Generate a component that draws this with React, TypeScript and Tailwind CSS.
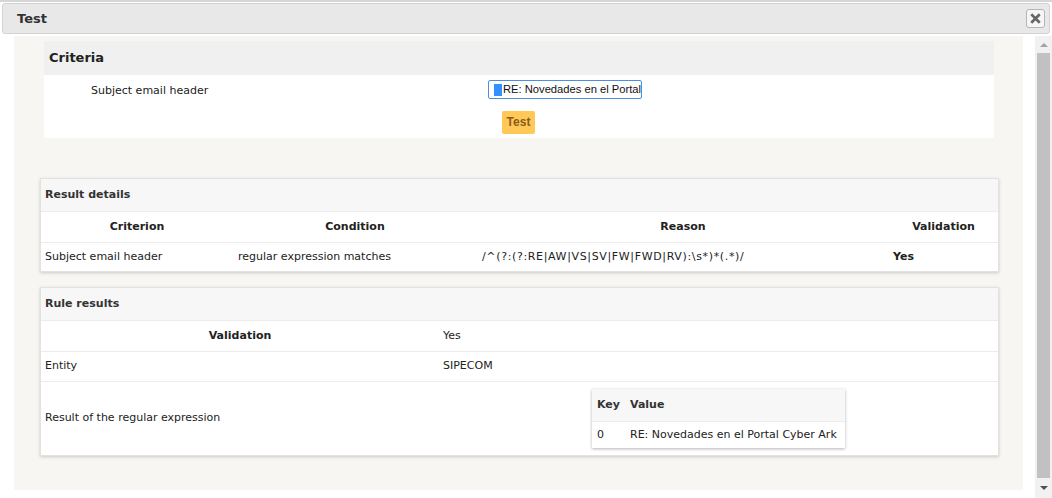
import React from "react";

const font = "font-['DejaVu_Sans',Verdana,sans-serif]";

function Panel({ title, children }: { title: string; children: React.ReactNode }) {
  return (
    <div className="ml-[26px] w-[959px] border border-[#e2e2e2] bg-white shadow-[0_1px_3px_rgba(0,0,0,0.18)]">
      <div className="flex h-[33px] items-center border-b border-[#ececec] bg-[#f7f7f7] px-[4px] text-[11px] font-bold text-[#333]">
        {title}
      </div>
      {children}
    </div>
  );
}

function Scrollbar() {
  return (
    <div className="flex w-[17px] flex-col items-center bg-[#f1f1f1]">
      <div className="flex h-[16px] items-center justify-center pt-[2px]">
        <div className="h-0 w-0 border-x-[4px] border-b-[4px] border-x-transparent border-b-[#a3a3a3]" />
      </div>
      <div className="mt-[1px] h-[425px] w-[13px] bg-[#c1c1c1]" />
      <div className="flex h-[16px] items-center justify-center pt-[4px]">
        <div className="h-0 w-0 border-x-[4px] border-t-[4px] border-x-transparent border-t-[#505050]" />
      </div>
    </div>
  );
}

export default function App() {
  return (
    <div className={`relative h-[498px] w-[1052px] overflow-hidden bg-white text-[#222] ${font}`}>
      <div className="border-t-2 border-[#d6d6d6]" />
      {/* title bar */}
      <div className="mx-[2px] mt-[1px] flex h-[31px] items-center justify-between rounded-[3px] border border-[#d3d3d3] bg-[#e8e8e8] pl-[14px] pr-[4px]">
        <span className="text-[13px] font-bold text-[#333]">Test</span>
        <button className="flex h-[19px] w-[19px] items-center justify-center rounded-[3px] border border-[#b5b5b5] bg-[#f6f6f6]">
          <svg width="11" height="11" viewBox="0 0 10 10">
            <path d="M2 2 L8 8 M8 2 L2 8" stroke="#666" strokeWidth="2.4" strokeLinecap="square" />
          </svg>
        </button>
      </div>

      <div className="mt-[2px] flex h-[463px]">
        <div className="w-[14px]" />
        <div className="h-[454px] w-[1009px] bg-[#f7f6f3] pt-[5px]">
          {/* Criteria */}
          <div className="ml-[30px] w-[950px] bg-white">
            <div className="flex h-[34px] items-center bg-[#f0f0f0] px-[5px] text-[13px] font-bold text-[#222]">
              Criteria
            </div>
            <div className="h-[63px] pt-[5px]">
              <div className="flex h-[19px] items-center">
                <span className="mt-[3px] w-[444px] pl-[47px] text-[11px]">Subject email header</span>
                <div className="flex h-[19px] w-[154px] items-center overflow-hidden whitespace-nowrap rounded-[2px] border border-[#4a90e2] bg-white pl-[5px] font-['Liberation_Sans',Arial,sans-serif] text-[11.2px] text-[#111]">
                  <span className="mr-[1px] inline-block h-[12px] w-[8px] shrink-0 bg-[#3390ff]" />
                  <span className="shrink-0">RE: Novedades en el Portal</span>
                </div>
              </div>
              <div className="mt-[10px] pl-[458px]">
                <button className="h-[23px] w-[33px] rounded-[2px] bg-[#ffc857] font-['Liberation_Sans',Arial,sans-serif] text-[12px] font-bold text-[#8a5b1c]">
                  Test
                </button>
              </div>
            </div>
          </div>

          <div className="h-[40px]" />

          <Panel title="Result details">
            <table className="w-full table-fixed border-collapse text-[11px]">
              <colgroup>
                <col className="w-[192px]" />
                <col className="w-[244px]" />
                <col className="w-[412px]" />
                <col />
              </colgroup>
              <thead>
                <tr className="h-[30px] border-b border-[#ececec]">
                  <th className="text-center font-bold">Criterion</th>
                  <th className="text-center font-bold">Condition</th>
                  <th className="text-center font-bold">Reason</th>
                  <th className="text-center font-bold">Validation</th>
                </tr>
              </thead>
              <tbody>
                <tr className="h-[29px]">
                  <td className="px-[4px]">Subject email header</td>
                  <td className="px-[5px]">regular expression matches</td>
                  <td className="px-[5px] tracking-[0.65px]">/^(?:(?:RE|AW|VS|SV|FW|FWD|RV):\s*)*(.*)/</td>
                  <td className="px-[4px] font-bold">Yes</td>
                </tr>
              </tbody>
            </table>
          </Panel>

          <div className="h-[15px]" />

          <Panel title="Rule results">
            <table className="w-full table-fixed border-collapse text-[11px]">
              <colgroup>
                <col className="w-[398px]" />
                <col />
              </colgroup>
              <tbody>
                <tr className="h-[30px] border-b border-[#ececec]">
                  <th className="text-center font-bold">Validation</th>
                  <td className="px-[4px]">Yes</td>
                </tr>
                <tr className="h-[30px] border-b border-[#ececec]">
                  <td className="px-[4px]">Entity</td>
                  <td className="px-[4px]">SIPECOM</td>
                </tr>
                <tr className="h-[74px]">
                  <td className="px-[4px]">Result of the regular expression</td>
                  <td>
                    <div className="flex justify-center">
                      <table className="w-[253px] border-collapse bg-white text-left text-[11px] shadow-[0_1px_3px_rgba(0,0,0,0.3)]">
                        <thead>
                          <tr className="h-[33px] border-b border-[#ececec] bg-[#f7f7f7]">
                            <th className="w-[38px] pl-[5px] font-bold text-[#333]">Key</th>
                            <th className="font-bold text-[#333]">Value</th>
                          </tr>
                        </thead>
                        <tbody>
                          <tr className="h-[26px]">
                            <td className="pl-[5px]">0</td>
                            <td>RE: Novedades en el Portal Cyber Ark</td>
                          </tr>
                        </tbody>
                      </table>
                    </div>
                  </td>
                </tr>
              </tbody>
            </table>
          </Panel>
        </div>
        <div className="w-[12px]" />
        <Scrollbar />
      </div>
    </div>
  );
}
